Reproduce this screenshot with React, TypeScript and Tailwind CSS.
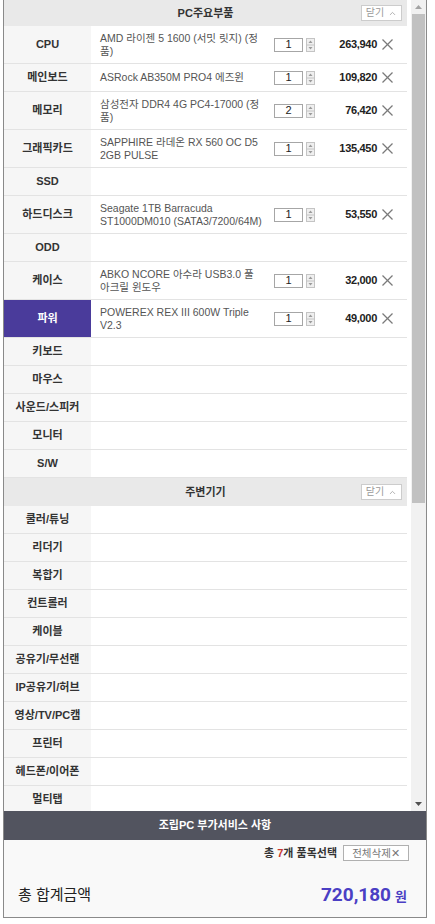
import { ChevronUp } from "lucide-react";

type Part = {
  label: string;
  lines?: string[];
  qty?: number;
  price?: string;
  active?: boolean;
};

const mainParts: Part[] = [
  { label: "CPU", lines: ["AMD 라이젠 5 1600 (서밋 릿지) (정", "품)"], qty: 1, price: "263,940" },
  { label: "메인보드", lines: ["ASRock AB350M PRO4 에즈윈"], qty: 1, price: "109,820" },
  { label: "메모리", lines: ["삼성전자 DDR4 4G PC4-17000 (정", "품)"], qty: 2, price: "76,420" },
  { label: "그래픽카드", lines: ["SAPPHIRE 라데온 RX 560 OC D5", "2GB PULSE"], qty: 1, price: "135,450" },
  { label: "SSD" },
  { label: "하드디스크", lines: ["Seagate 1TB Barracuda", "ST1000DM010 (SATA3/7200/64M)"], qty: 1, price: "53,550" },
  { label: "ODD" },
  { label: "케이스", lines: ["ABKO NCORE 아수라 USB3.0 풀", "아크릴 윈도우"], qty: 1, price: "32,000" },
  { label: "파워", lines: ["POWEREX REX III 600W Triple", "V2.3"], qty: 1, price: "49,000", active: true },
  { label: "키보드" },
  { label: "마우스" },
  { label: "사운드/스피커" },
  { label: "모니터" },
  { label: "S/W" },
];

const extras = [
  "쿨러/튜닝",
  "리더기",
  "복합기",
  "컨트롤러",
  "케이블",
  "공유기/무선랜",
  "IP공유기/허브",
  "영상/TV/PC캠",
  "프린터",
  "헤드폰/이어폰",
  "멀티탭",
];

function CloseButton() {
  return (
    <button className="flex h-[16px] w-[41px] items-center justify-center gap-[4px] border border-[#cccccc] bg-white text-[10px] leading-none text-[#999]">
      닫기
      <ChevronUp size={9} strokeWidth={2} className="text-[#9a9a9a]" />
    </button>
  );
}

function SectionHeader({ title, tall = false }: { title: string; tall?: boolean }) {
  return (
    <div
      className={`grid grid-cols-[1fr_auto_1fr] items-center bg-[#e9e9e9] ${tall ? "h-[28px]" : "h-[26px]"}`}
    >
      <div />
      <div className="text-[11px] font-bold text-[#333]">{title}</div>
      <div className="flex justify-end pr-[5px]">
        <CloseButton />
      </div>
    </div>
  );
}

function Spinner() {
  return (
    <svg width="9" height="14" viewBox="0 0 9 14" className="block">
      <rect x="0.5" y="0.5" width="8" height="13" fill="#efefef" stroke="#c4c4c4" />
      <line x1="1" y1="7" x2="8" y2="7" stroke="#c4c4c4" />
      <polygon points="2.5,5 4.5,2.5 6.5,5" fill="#9b9b9b" />
      <polygon points="2.5,9 4.5,11.5 6.5,9" fill="#9b9b9b" />
    </svg>
  );
}

function RemoveIcon() {
  return (
    <svg width="13" height="13" viewBox="0 0 13 13" className="block">
      <line x1="1.5" y1="1.5" x2="11.5" y2="11.5" stroke="#7a7a7a" strokeWidth="1.2" />
      <line x1="11.5" y1="1.5" x2="1.5" y2="11.5" stroke="#7a7a7a" strokeWidth="1.2" />
    </svg>
  );
}

function PartRow({ part }: { part: Part }) {
  const tall = (part.lines?.length ?? 0) > 1;
  return (
    <div className={`flex border-b border-[#e3e3e3] ${tall ? "h-[38px]" : "h-[28px]"}`}>
      <div
        className={`flex w-[87px] shrink-0 items-center justify-center text-[11px] font-bold ${
          part.active ? "bg-[#4a3b9b] text-white" : "bg-[#f6f6f6] text-[#333]"
        }`}
      >
        {part.label}
      </div>
      {part.lines && (
        <>
          <div className="flex w-[183px] shrink-0 flex-col justify-center pl-[9px] text-[10.5px] leading-[13px] text-[#555]">
            {part.lines.map((line) => (
              <span key={line} className="whitespace-nowrap">
                {line}
              </span>
            ))}
          </div>
          <div className="flex items-center gap-[3px]">
            <div className="flex h-[14px] w-[29px] items-center justify-center border border-[#a6a6a6] bg-white text-[11px] text-[#222]">
              {part.qty}
            </div>
            <Spinner />
          </div>
          <div className="flex flex-1 items-center justify-end text-[11px] font-bold tracking-[-0.3px] text-[#222]">
            {part.price}
          </div>
          <div className="ml-[4px] flex items-center pr-[13px]">
            <RemoveIcon />
          </div>
        </>
      )}
    </div>
  );
}

function Scrollbar() {
  return (
    <div className="flex w-[15px] flex-col bg-[#f1f1f1]">
      <div className="flex h-[14px] items-center justify-center">
        <svg width="7" height="4" viewBox="0 0 7 4">
          <polygon points="0,4 3.5,0 7,4" fill="#a3a3a3" />
        </svg>
      </div>
      <div className="mx-[1px] h-[489px] bg-[#c1c1c1]" />
      <div className="flex-1" />
      <div className="flex h-[15px] items-center justify-center">
        <svg width="7" height="4" viewBox="0 0 7 4">
          <polygon points="0,0 7,0 3.5,4" fill="#505050" />
        </svg>
      </div>
    </div>
  );
}

export default function App() {
  return (
    <div className="h-[924px] w-[435px] bg-white pl-[3px] font-['Liberation_Sans','Noto_Sans_CJK_KR',sans-serif]">
      <div className="flex h-[918px] w-[424px] flex-col border border-t-0 border-[#8a8a8a]">
        <div className="flex h-[811px] shrink-0">
          <div className="w-[403px] overflow-hidden">
            <SectionHeader title="PC주요부품" />
            {mainParts.map((part) => (
              <PartRow key={part.label} part={part} />
            ))}
            <SectionHeader title="주변기기" tall />
            {extras.map((label) => (
              <PartRow key={label} part={{ label }} />
            ))}
          </div>
          <div className="w-[4px] bg-white" />
          <Scrollbar />
        </div>

        <div className="flex h-[29px] shrink-0 items-center justify-center bg-[#52545f] text-[11px] font-bold text-white">
          조립PC 부가서비스 사항
        </div>

        <div className="flex flex-1 flex-col bg-[#f9f9f9] pl-[14px] pr-[17px] pt-[5px]">
          <div className="flex h-[16px] items-center justify-end gap-[6px]">
            <span className="text-[11px] font-bold text-[#333]">
              총 <span className="text-[#c8352e]">7</span>개 품목선택
            </span>
            <button className="flex h-[16px] w-[66px] items-center justify-center border border-[#b0b0b0] bg-white text-[10.5px] leading-none text-[#777]">
              전체삭제✕
            </button>
          </div>
          <div className="mt-[14px] flex h-[40px] items-center justify-between">
            <span className="text-[15px] text-[#222]">총 합계금액</span>
            <span className="flex items-baseline gap-[4px] pr-[2px] text-[#4b3fc4]">
              <span className="font-['Roboto','Liberation_Sans',sans-serif] text-[19px] font-bold">720,180</span>
              <span className="text-[13px] font-bold">원</span>
            </span>
          </div>
        </div>
      </div>
    </div>
  );
}
